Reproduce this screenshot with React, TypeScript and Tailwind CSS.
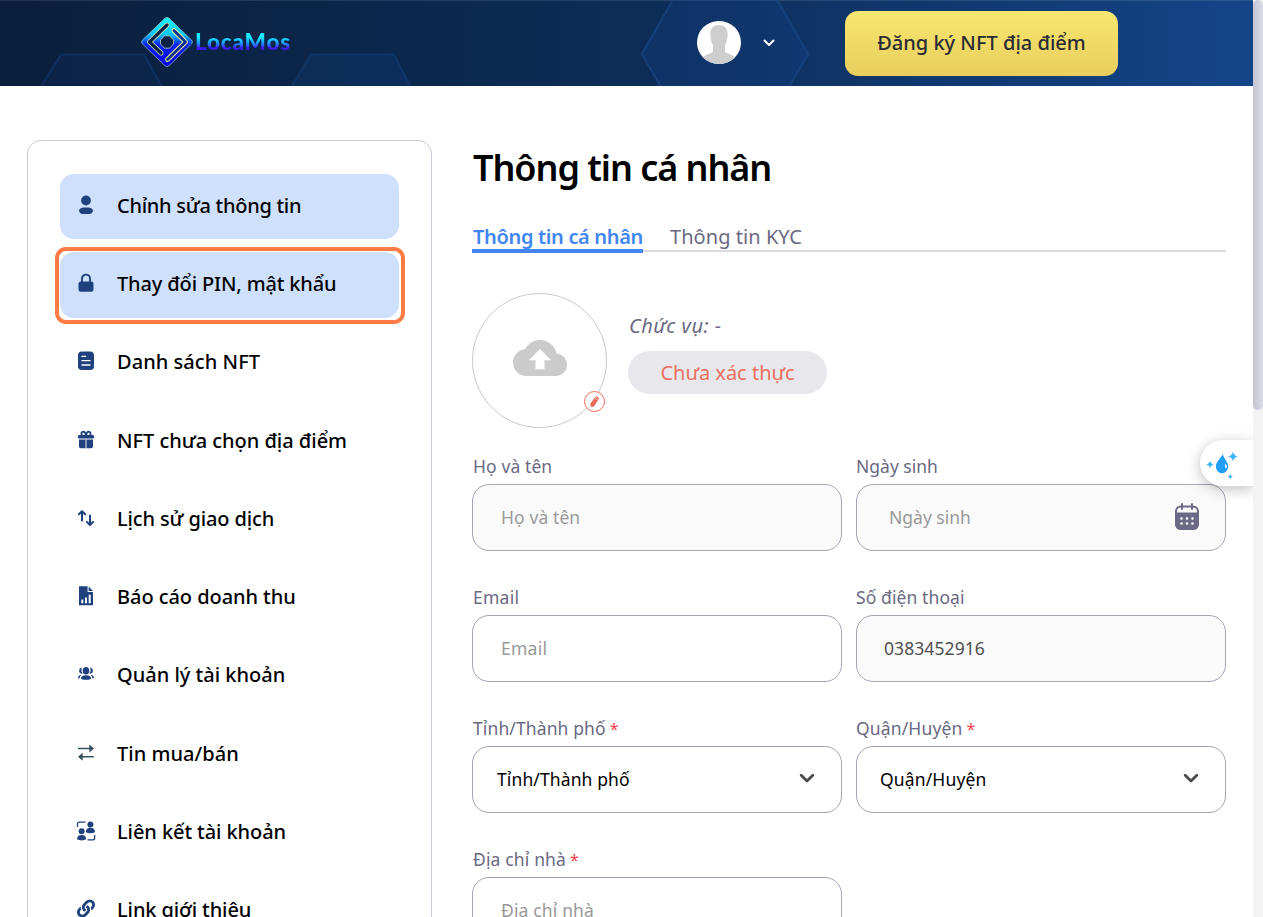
import React from "react";
import type { ReactNode } from "react";
import { MdCloudUpload } from "react-icons/md";
import { FaLink } from "react-icons/fa";

const NAVY = "#1f427f";

const menu: { label: string; tracking: string; icon: ReactNode; active?: boolean; focused?: boolean }[] = [
  {
    label: "Chỉnh sửa thông tin",
    tracking: "tracking-[-0.27px]",
    active: true,
    icon: (
      <g fill={NAVY}>
        <ellipse cx="10" cy="5.5" rx="4.9" ry="5" />
        <rect x="3" y="12.5" width="14" height="6.6" rx="5" ry="3.3" />
      </g>
    ),
  },
  {
    label: "Thay đổi PIN, mật khẩu",
    tracking: "tracking-[-0.15px]",
    active: true,
    focused: true,
    icon: (
      <g>
        <path d="M6 9V5.6a4 4 0 0 1 8 0V9" fill="none" stroke={NAVY} strokeWidth="1.9" />
        <rect x="2.5" y="8.4" width="15" height="10.4" rx="2.4" fill={NAVY} />
      </g>
    ),
  },
  {
    label: "Danh sách NFT",
    tracking: "tracking-[0.05px]",
    icon: (
      <g>
        <rect x="2" y="0.5" width="16" height="18.6" rx="3.8" fill={NAVY} />
        <path d="M6 5.4h3.6M6 9.7h8M6 14h8" stroke="#fff" strokeWidth="1.3" strokeLinecap="round" />
      </g>
    ),
  },
  {
    label: "NFT chưa chọn địa điểm",
    tracking: "tracking-[-0.03px]",
    icon: (
      <g>
        <path d="M10 5.6C9.6 2.8 8.6 1.6 7.2 1.6S5 3 5.8 5.6M10 5.6c.4-2.8 1.4-4 2.8-4S15 3 14.2 5.6" fill="none" stroke={NAVY} strokeWidth="1.9" />
        <rect x="1.9" y="5" width="16.2" height="3.6" rx="1.4" fill={NAVY} />
        <path d="M3 9.6h14v6.6a2 2 0 0 1-2 2H5a2 2 0 0 1-2-2z" fill={NAVY} />
        <path d="M10 9.4v9" stroke="#fff" strokeWidth="0.9" />
      </g>
    ),
  },
  {
    label: "Lịch sử giao dịch",
    tracking: "tracking-[-0.13px]",
    icon: (
      <path d="M6 12.4V3.6M2.900 6.300 6 3.200l3.100 3.100M14 7.400v9.200M10.900 13.900l3.100 3.100 3.100-3.100" fill="none" stroke={NAVY} strokeWidth="2" strokeLinecap="round" strokeLinejoin="round" />
    ),
  },
  {
    label: "Báo cáo doanh thu",
    tracking: "tracking-[-0.06px]",
    icon: (
      <g>
        <path d="M3 .3h8.600v5.600h5.400V19.300H3z" fill={NAVY} />
        <path d="M12.600.5 17 4.900h-4.400z" fill={NAVY} />
        <path d="M6.300 17.200v-3.600M10 17.200v-5.800M13.700 17.200V8.800" stroke="#fff" strokeWidth="2" />
      </g>
    ),
  },
  {
    label: "Quản lý tài khoản",
    tracking: "tracking-[0px]",
    icon: (
      <g fill={NAVY}>
        <ellipse cx="10" cy="6.800" rx="3.300" ry="3.800" />
        <path d="M5 14.400c0-2.400 2.200-3.200 5-3.200s5 .8 5 3.200c0 .9-2 1.400-5 1.400s-5-.5-5-1.400z" />
        <path d="M5.800 3.500a3.200 3.200 0 0 0-.1 6.300q.600 0 .800-.200a7 7 0 0 1-.700-6.100zM14.200 3.500a3.200 3.200 0 0 1 .1 6.300q-.600 0-.800-.200a7 7 0 0 0 .700-6.100zM4.900 10.900C3 10.900 2 12.400 2 14.200h1.800c0-1.400.400-2.400 1.700-3.200zM15.100 10.900c1.900 0 2.900 1.500 2.900 3.300h-1.800c0-1.400-.400-2.400-1.700-3.200z" />
      </g>
    ),
  },
  {
    label: "Tin mua/bán",
    tracking: "tracking-[0.030px]",
    icon: (
      <g fill="#37505f" stroke="#37505f">
        <path d="M2 5.500h12M6 13.700h11.800" strokeWidth="1.400" fill="none" />
        <path d="M13.300 1.500V9.500L18 5.500zM6.700 9.700v8L2 13.700z" stroke="none" />
      </g>
    ),
  },
  {
    label: "Liên kết tài khoản",
    tracking: "tracking-[-0.080px]",
    icon: (
      <g fill={NAVY}>
        <circle cx="14.400" cy="3.500" r="3" />
        <path d="M9.800 11.200c0-3 1.800-4.400 4.600-4.400S19 8.200 19 11.200c-2.800 1.500-6.400 1.500-9.200 0z" />
        <circle cx="5.600" cy="10.300" r="3" />
        <path d="M1 18.300c0-3 1.800-4.400 4.600-4.400s4.600 1.400 4.600 4.400c-2.800 1.500-6.400 1.500-9.200 0z" />
        <path d="M1.500 6V3a1.900 1.900 0 0 1 1.900-1.900H9.500M18.600 14v3a1.900 1.900 0 0 1-1.900 1.900H11.500" fill="none" stroke={NAVY} strokeWidth="1.300" />
      </g>
    ),
  },
  { label: "Link giới thiệu", tracking: "tracking-[-0.100px]", icon: <FaLink x="1" y="0.500" size={18} color={NAVY} /> },
];

function Logo() {
  return (
    <svg width="52" height="50" viewBox="0 0 52 50" className="mb-[2px]">
      <defs>
        <linearGradient id="mark" x1="0" y1="0" x2="0" y2="1">
          <stop offset="0.050" stopColor="#10f4ff" />
          <stop offset="0.350" stopColor="#06c4ff" />
          <stop offset="0.550" stopColor="#0a24f0" />
          <stop offset="1" stopColor="#0502e0" />
        </linearGradient>
      </defs>
      <path d="M24 1.200Q26 -.3 28 1.200L50.500 23q2 2 0 4L28 48.800q-2 1.500-4 0L1.500 27q-2-2 0-4z" fill="url(#mark)" stroke="#a9d8d8" strokeWidth="0.600" />
      <g fill="none" strokeLinecap="round" strokeLinejoin="round">
        <path d="M26 8 8.500 25 20 36" stroke="#e6eeb0" strokeWidth="4.800" />
        <path d="M26 8 8.500 25 20 36" stroke="#0a2344" strokeWidth="3.400" />
        <path d="M33 13.500 44.500 25 26.500 42.500" stroke="#f2ee90" strokeWidth="4.800" />
        <path d="M33 13.500 44.500 25 26.500 42.500" stroke="#0a2f94" strokeWidth="2.800" />
      </g>
      <path d="M23.500 18.800h5L32.500 23v4l-4 4.200h-5L19.500 27v-4z" fill="#0a2344" stroke="#d9e8c0" strokeWidth="0.700" />
    </svg>
  );
}

function Header() {
  return (
    <header className="relative h-[86px] shrink-0 bg-linear-to-r from-[#0a1f3c] via-[#0d2c57] to-[#134588]">
      <svg className="absolute inset-0" width="1253" height="86" viewBox="0 0 1253 86">
        <path d="M0 .5h1253" stroke="#ffffff" strokeOpacity="0.1" />
        <g stroke="#164280" strokeOpacity="0.450" strokeWidth="2" fill="#164fa0" fillOpacity="0.080">
          <path d="M41 87 61 54.500h83L162 87" />
          <path d="M291 87 311 54.500h83L411 87" fillOpacity="0.180" />
          <path d="M661 87 642 54 674-2H776L808 54 789 87" fillOpacity="0.180" strokeOpacity="0.900" />
        </g>
      </svg>
      <div className="relative flex h-full items-center pl-[141px]">
        <Logo />
        <span className="mb-[3px] ml-[2px] w-[101px] bg-linear-to-b from-[#18eaff] from-35% via-[#1e9dff] via-52% to-[#3a1cf5] to-68% bg-clip-text font-['Lato'] text-[22.500px] leading-[30px] font-black tracking-[0.800px] text-transparent">
          LocaMos
        </span>
        <div className="mb-[2px] ml-[401px] flex h-[43px] w-11 items-center justify-center overflow-hidden rounded-full bg-white">
          <svg width="44" height="44" viewBox="0 0 44 44" fill="#cecece">
            <path d="M22 5c5.500 0 8.800 3.500 8.600 9.500-.1 5-.9 8-2.600 10.500v7c.8 1 6 1.500 11 6L36 45H8l-3-7c5-4.500 10.200-5 11-6v-7c-1.700-2.500-2.500-5.500-2.600-10.500C13.200 8.500 16.500 5 22 5z" />
          </svg>
        </div>
        <svg width="12" height="8" viewBox="0 0 12 8" className="ml-[22px]">
          <path d="M1.500 1.500 6 6l4.500-4.500" fill="none" stroke="#fff" strokeWidth="2" strokeLinecap="round" strokeLinejoin="round" />
        </svg>
        <button className="ml-[70px] h-[65px] w-[273px] rounded-[13px] bg-linear-to-b from-[#f7e76f] to-[#e9ce5e] text-[20px] font-medium whitespace-nowrap text-[#2b2b35]">
          Đăng ký NFT địa điểm
        </button>
      </div>
    </header>
  );
}

function Sidebar() {
  return (
    <aside className="mt-[54px] ml-[27px] h-[900px] w-[405px] shrink-0 rounded-[14px] border border-[#c9c8d4] px-8 pt-[33px]">
      <nav className="flex flex-col gap-[13px]">
        {menu.map((m) => (
          <a key={m.label} className={`relative flex h-[65.300px] shrink-0 items-center rounded-[14px] pl-4 ${m.active ? "bg-[#cfe0fc]" : ""}`}>
            {m.focused && <span className="absolute -top-[5px] -right-[6px] -bottom-[6px] -left-[5px] rounded-[11px] border-4 border-[#ff7a45]" />}
            <svg width="20" height="20" viewBox="0 0 20 20" className="mb-1">{m.icon}</svg>
            <span className={`mb-0.5 ml-[21px] text-[20px] font-medium whitespace-nowrap text-black ${m.tracking}`}>{m.label}</span>
          </a>
        ))}
      </nav>
    </aside>
  );
}

function Chevron() {
  return (
    <svg width="16" height="11" viewBox="0 0 16 11" className="mb-[3px]">
      <path d="M2.200 2.200 8 8l5.800-5.800" fill="none" stroke="#4a4a4a" strokeWidth="2.800" strokeLinecap="round" strokeLinejoin="round" />
    </svg>
  );
}

function CalendarIcon() {
  return (
    <svg width="24" height="28" viewBox="0 0 24 28" className="mb-0.5">
      <rect x="1" y="3.500" width="22" height="22.500" rx="5" fill="none" stroke="#6b6a86" strokeWidth="2" />
      <path d="M0 9.500h24V21a6 6 0 0 1-6 6H6a6 6 0 0 1-6-6z" fill="#6b6a86" />
      <path d="M7 1v5M17 1v5" stroke="#6b6a86" strokeWidth="2" strokeLinecap="round" />
      <g fill="#fff">
        {[6.5, 12, 17.5].map((x) => (
          <React.Fragment key={x}>
            <circle cx={x} cy="15.500" r="1.300" />
            <circle cx={x} cy="20.500" r="1.300" />
          </React.Fragment>
        ))}
      </g>
    </svg>
  );
}

type FieldProps = { label: string; labelClass?: string; required?: boolean; text: string; box: string; textClass: string; end?: ReactNode };

function Field({ label, labelClass = "pl-px", required, text, box, textClass, end }: FieldProps) {
  return (
    <div className="h-[131px]">
      <div className={`flex h-[30px] items-center gap-[4px] pb-[5px] text-[17.500px] whitespace-nowrap text-[#6a6983] ${labelClass}`}>
        <span>{label}</span>
        {required && <span className="text-[16px] text-[#f5424d]">*</span>}
      </div>
      <div className={`flex h-[67px] items-center justify-between rounded-[17px] border border-[#a5a4b8] pr-[26px] ${box}`}>
        <span className={`text-[17.500px] whitespace-nowrap ${textClass}`}>{text}</span>
        {end}
      </div>
    </div>
  );
}

function Main() {
  return (
    <main className="ml-10 w-[754px] shrink-0">
      <h1 className="mt-[55px] ml-px h-[54px] text-[36px] leading-[54px] font-semibold tracking-[-1.050px] whitespace-nowrap text-black">Thông tin cá nhân</h1>
      <div className="mt-[26px] flex h-[31px] border-b-2 border-[#dad9e0] text-[20px] leading-8 whitespace-nowrap">
        <span className="h-8 w-[171px] shrink-0 border-b-4 border-[#4285f4] pl-px font-semibold tracking-[-0.330px] text-[#4285f4]">Thông tin cá nhân</span>
        <span className="ml-[27px] tracking-[0.050px] text-[#6a6983]">Thông tin KYC</span>
      </div>
      <div className="mt-[41px] flex">
        <div className="relative flex size-[135px] items-center justify-center rounded-full border border-[#c9c9c9]">
          <MdCloudUpload size={54} color="#cbcbcb" className="mb-[6px]" />
          <div className="absolute top-[97px] left-[111px] flex size-[21px] items-center justify-center rounded-full border-[1.500px] border-[#ee6b5a] bg-white">
            <svg width="11" height="13" viewBox="0 0 11 13">
              <path d="M3.400 9.600 7.600 3.800" stroke="#ee6b5a" strokeWidth="4.400" strokeLinecap="round" />
              <path d="M5.600 2.900 8.600 5" stroke="#fff" strokeWidth="0.700" />
            </svg>
          </div>
        </div>
        <div className="mt-[16px] ml-[21px] flex flex-col">
          <span className="ml-px h-8 text-[20px] leading-[33px] tracking-[0.500px] whitespace-nowrap text-[#6a6983] italic">Chức vụ: -</span>
          <span className="mt-[10px] flex h-[43px] w-[199px] items-center justify-center rounded-full bg-[#e8e7eb] text-[20px] font-[450] text-[#ee6f5f]">Chưa xác thực</span>
        </div>
      </div>
      <div className="mt-[26px] grid grid-cols-2 gap-x-[14px]">
        <Field label="Họ và tên" labelClass="pl-px tracking-[0.100px]" text="Họ và tên" box="bg-[#fafafa] pl-7" textClass="text-[#999] tracking-[0.100px]" />
        <Field label="Ngày sinh" labelClass="" text="Ngày sinh" box="bg-[#fafafa] pl-8" textClass="text-[#999]" end={<CalendarIcon />} />
        <Field label="Email" labelClass="pl-px tracking-[0.250px]" text="Email" box="pl-7" textClass="text-[#999] tracking-[0.250px]" />
        <Field label="Số điện thoại" labelClass="tracking-[0.100px]" text="0383452916" box="bg-[#fafafa] pl-[27px]" textClass="text-[#505050] tracking-[0.080px]" />
        <Field label="Tỉnh/Thành phố" labelClass="pl-px tracking-[0.110px]" required text="Tỉnh/Thành phố" box="pl-6" textClass="text-black tracking-[0.110px]" end={<Chevron />} />
        <Field label="Quận/Huyện" labelClass="tracking-[0.150px]" required text="Quận/Huyện" box="pl-[23px]" textClass="text-black tracking-[0.150px]" end={<Chevron />} />
        <Field label="Địa chỉ nhà" labelClass="pl-px tracking-[0.150px]" required text="Địa chỉ nhà" box="pl-7" textClass="text-[#999] tracking-[0.150px]" />
      </div>
    </main>
  );
}

function FloatingWidget() {
  return (
    <div className="absolute top-[440px] right-0 flex h-[46px] w-[53px] items-center rounded-l-full bg-white pl-[6px] shadow-[0_3px_14px_rgba(0,0,0,0.260)]">
      <svg width="34" height="30" viewBox="0 0 34 30" className="mt-px">
        <path d="M17 5c.500 5 5.200 7.600 5.200 12.600a6.200 6.600 0 0 1-12.400 0C9.800 12.500 14.500 10 17 5z" fill="#1f9ef6" />
        <path d="M19.300 14.500c1 1.500 1.500 2.200 1.500 3.200 0 .8-.4 1.300-1.200 1.500-.7-.9-.8-2.500-.3-4.700z" fill="#fff" />
        <g fill="#3cb4f8">
          <path d="M27 2.500q.8 4.200 5 5-4.200.8-5 5-.8-4.200-5-5 4.200-.8 5-5z" />
          <path d="M4 12q.6 2.900 3.500 3.500Q4.600 16.100 4 19q-.6-2.900-3.500-3.500Q3.400 14.900 4 12z" />
          <path d="M24.300 25q.5 2 2.500 2.500-2 .5-2.500 2.500-.5-2-2.500-2.500 2-.5 2.500-2.500z" />
        </g>
      </svg>
    </div>
  );
}

export default function App() {
  return (
    <div className="flex h-[917px] w-[1263px] overflow-hidden bg-white font-['Noto_Sans','Liberation_Sans',sans-serif]">
      <div className="relative flex w-[1253px] shrink-0 flex-col overflow-hidden">
        <Header />
        <div className="flex">
          <Sidebar />
          <Main />
        </div>
        <FloatingWidget />
      </div>
      <div className="w-[10px] shrink-0 bg-[#f3f3f3]">
        <div className="h-[410px] rounded-full bg-linear-to-r from-[#c4c4d2] to-[#dcdce8]" />
      </div>
    </div>
  );
}
